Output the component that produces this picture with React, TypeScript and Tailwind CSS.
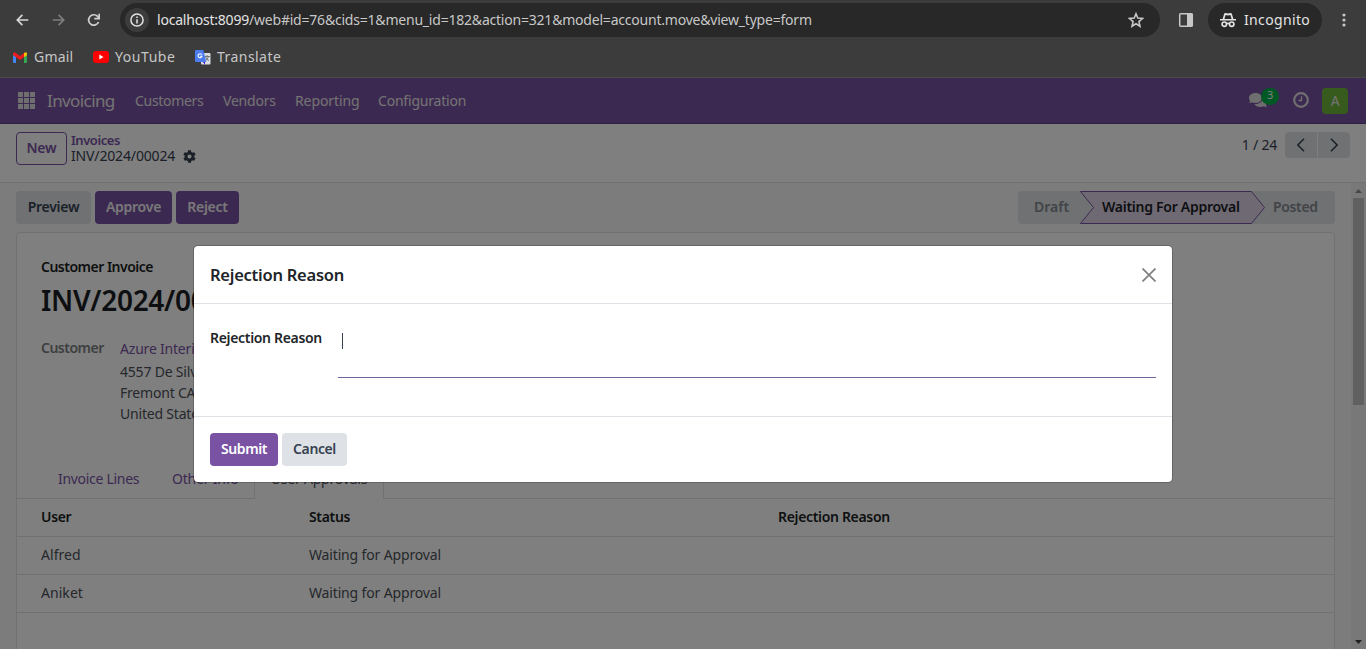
import React from 'react';
import { FaCog, FaComments } from 'react-icons/fa';

function BrowserBar() {
  return (
    <div className="h-[78px] shrink-0 border-b border-[#4a4a4a] bg-[#3c3c3c] text-[#c7c7c7]">
      <div className="flex h-10 items-center">
        <svg className="ml-4 shrink-0" width="13" height="12" viewBox="0 0 13 12" fill="none" stroke="#d6d6d6" strokeWidth="1.7">
          <path d="M12.3 6H1.4M6.4.9 1.3 6l5.1 5.1" />
        </svg>
        <svg className="ml-[23px] shrink-0" width="13" height="12" viewBox="0 0 13 12" fill="none" stroke="#7e7e7e" strokeWidth="1.7">
          <path d="M.7 6h10.9M6.6.9 11.7 6l-5.1 5.1" />
        </svg>
        <svg className="ml-[22px] mr-px shrink-0" width="13" height="14" viewBox="0 0 13 14" fill="none" stroke="#d0d0d0" strokeWidth="1.7">
          <path d="M11.6 9A5.2 5.2 0 1 1 10.6 3.4L12 5" />
          <path d="M12.2.8v4.9H7.3" />
        </svg>
        <div className="ml-[19px] flex h-[34px] w-[1040px] shrink-0 items-center rounded-full bg-[#282828] pl-[5px] pr-4">
          <div className="flex size-6 items-center justify-center rounded-full bg-[#3c3c3c]">
            <svg width="14" height="14" viewBox="0 0 14 14" fill="none" stroke="#e3e3e3" strokeWidth="1.5">
              <circle cx="7" cy="7" r="6.1" />
              <path d="M7 6.2v4.2M7 3.4v1.6" />
            </svg>
          </div>
          <span className="ml-2 flex-1 pb-0.5 text-[14px] tracking-[-0.21px] text-[#e3e3e3]">
            localhost:8099<span className="text-[#c7c7c7]">/web#id=76&amp;cids=1&amp;menu_id=182&amp;action=321&amp;model=account.move&amp;view_type=form</span>
          </span>
          <svg width="16" height="16" viewBox="0 0 16 16" fill="none" stroke="#c7c7c7" strokeWidth="1.6">
            <path d="m8 1.8 1.8 4.3 4.7.4-3.6 3.1L12 14.2 8 11.7 4 14.2l1.100-4.600L1.500 6.500l4.700-.4z" />
          </svg>
        </div>
        <svg className="ml-[18px] shrink-0" width="16" height="16" viewBox="0 0 16 16">
          <rect x="1.700" y="1.700" width="12.600" height="12.600" rx="1" fill="none" stroke="#c7c7c7" strokeWidth="1.500" />
          <path d="M9 1.500h5.500v13H9z" fill="#c7c7c7" />
        </svg>
        <div className="ml-[14px] flex h-[34px] w-[114px] shrink-0 items-center rounded-full bg-[#282828] pl-3">
          <svg width="16" height="16" viewBox="0 0 16 16" fill="#e3e3e3">
            <path d="M0 8.500V6.900h2.600l1.500-5c.2-.7.8-1 1.500-.8L8 1.600l2.400-.5c.7-.2 1.300.1 1.500.8L13.400 6.900H16v1.600zM4.400 6.900h7.200l-1.200-4L8 3.400l-2.400-.5z" fillRule="evenodd" />
            <g fill="none" stroke="#e3e3e3" strokeWidth="1.700">
              <circle cx="4.300" cy="12.200" r="2.200" />
              <circle cx="11.700" cy="12.200" r="2.200" />
              <path d="M6.400 11.800q1.600-.8 3.200 0" />
            </g>
          </svg>
          <span className="ml-2 pb-0.5 text-[14px] tracking-[0.35px] text-[#e3e3e3]">Incognito</span>
        </div>
        <svg className="ml-[20px] shrink-0" width="4" height="16" viewBox="0 0 4 16" fill="#c7c7c7">
          <circle cx="2" cy="3" r="1.600" />
          <circle cx="2" cy="8" r="1.600" />
          <circle cx="2" cy="13" r="1.600" />
        </svg>
      </div>
      <div className="flex h-[34px] items-center pl-[13px] text-[14px]">
        <svg width="14" height="11" viewBox="0 0 14 11">
          <path d="M0 2v8q0 1 1 1h2V4z" fill="#4285f4" />
          <path d="M14 2v8q0 1-1 1h-2V4z" fill="#34a853" />
          <path d="M11 5.200V1l.8-.6Q13 0 14 1v2z" fill="#fbbc04" />
          <path d="M3 5.200 7 8l4-2.800V1L7 4 2.200.4Q1 0 0 1v2z" fill="#e91d1d" />
        </svg>
        <span className="ml-[7px] w-[59px] pb-0.5 tracking-[0.2px]">Gmail</span>
        <svg width="16" height="12" viewBox="0 0 16 12">
          <rect width="16" height="12" rx="3" fill="#f00" />
          <path d="m6.300 3.500 4.200 2.500-4.200 2.500z" fill="#fff" />
        </svg>
        <span className="ml-[6px] w-[80px] pb-0.5 tracking-[0.55px]">YouTube</span>
        <svg width="16" height="15" viewBox="0 0 16 15">
          <rect x="6" y="3" width="9.500" height="11.500" rx="1" fill="#dadce0" />
          <path d="m8 12 2 2.700V12z" fill="#3b18d8" />
          <path d="M9.500 6.500H15M12 5v1.500m1.700 0q-1 3-4 4.500m1-4 3 4" stroke="#6b7075" strokeWidth=".9" fill="none" />
          <path d="M1 0h7.300l3 12H1q-1 0-1-1V1q0-1 1-1" fill="#4d7cf0" />
          <path d="M6.800 4.700A2 2 0 1 0 7 6.200H5.200" stroke="#fff" strokeWidth="1.100" fill="none" />
        </svg>
        <span className="ml-[6px] pb-0.5 tracking-[0.45px]">Translate</span>
      </div>
    </div>
  );
}

function Navbar() {
  return (
    <nav className="flex h-[46px] shrink-0 items-center border-b border-[#5f3f80] bg-[#7952a3] text-[14px] tracking-[-0.2px] text-[#e6e6e6]">
      <svg className="mb-px ml-[18px]" width="17" height="17" viewBox="0 0 17 17" fill="#dedede">
        {[0, 6, 12].map((y) => [0, 6, 12].map((x) => <rect key={`${x}-${y}`} x={x} y={y} width="5" height="5" />))}
      </svg>
      <span className="ml-3 w-[88px] text-[17px] tracking-[-0.6px]">Invoicing</span>
      <span className="w-[88px] tracking-[-0.3px]">Customers</span>
      <span className="w-[72px]">Vendors</span>
      <span className="w-[83px] tracking-[-0.1px]">Reporting</span>
      <span>Configuration</span>
      <div className="relative mb-1 ml-auto mr-[26px] h-4 w-[18px]">
        <FaComments size={18} color="#dedede" />
        <span className="absolute left-[12px] top-[-3px] flex h-[17px] w-[18px] items-center justify-center rounded-full bg-[#00b04b] pb-px text-[11px] text-white">3</span>
      </div>
      <svg className="mb-0.5" width="16" height="16" viewBox="0 0 16 16" fill="none" stroke="#dedede" strokeWidth="2.2">
        <circle cx="8" cy="8" r="6.800" />
        <path d="M8.500 4.300V8.500H5.500" strokeWidth="1.400" />
      </svg>
      <span className="ml-[13px] mr-[18px] flex size-[26px] items-center justify-center rounded bg-[#6fb43a] text-[14px]">A</span>
    </nav>
  );
}

function ControlPanel() {
  return (
    <div className="flex h-[59px] shrink-0 justify-between border-b border-[#dee2e6] bg-white px-4 pt-2 text-[14px]">
      <div className="flex">
        <button className="h-[33px] w-[51px] rounded border border-[#7952a3] pb-0.5 font-semibold tracking-[-0.2px] text-[#7952a3]">New</button>
        <div className="ml-1 flex flex-col">
          <span className="h-4 text-[13px] font-semibold leading-4 tracking-[-0.45px] text-[#7952a3]">Invoices</span>
          <span className="flex h-4 items-center text-[14px] leading-4 tracking-[-0.15px] text-[#374151]">
            <span className="w-[112px]">INV/2024/00024</span>
            <FaCog size={13} color="#374151" />
          </span>
        </div>
      </div>
      <div className="flex h-[26px] items-center text-[#374151]">
        <span className="mr-2 pb-px tracking-[-0.2px]">1 / 24</span>
        <span className="flex h-[26px] w-8 items-center justify-center rounded-l bg-[#dee2e6]">
          <svg width="8" height="14" viewBox="0 0 8 14" fill="none" stroke="#374151" strokeWidth="1.500"><path d="M7 .8.9 7 7 13.200" /></svg>
        </span>
        <span className="ml-px flex h-[26px] w-8 items-center justify-center rounded-r bg-[#dee2e6]">
          <svg width="8" height="14" viewBox="0 0 8 14" fill="none" stroke="#374151" strokeWidth="1.500"><path d="m1 .8 6.100 6.200L1 13.200" /></svg>
        </span>
      </div>
    </div>
  );
}

function StatusBar() {
  return (
    <div className="flex h-[33px] items-stretch justify-between text-[14px] font-semibold tracking-[-0.25px]">
      <div className="flex gap-1 text-[#f1f1f1]">
        <button className="w-[75px] rounded bg-[#dee2e6] pb-0.5 text-[#374151]">Preview</button>
        <button className="w-[77px] rounded bg-[#7952a3] pb-0.5">Approve</button>
        <button className="w-[63px] rounded bg-[#7952a3] pb-0.5">Reject</button>
      </div>
      <div className="relative flex w-[317px] items-center overflow-hidden rounded bg-[#dee2e6] pb-0.5 text-[#85898e]">
        <svg className="absolute left-[62px] top-0" width="186" height="33" viewBox="0 0 186 33" fill="#dfd2e9" stroke="#7952a3">
          <path d="M.5.5H171.500L184.500 16.500 171.500 32.500H.5L13.500 16.500z" />
        </svg>
        <span className="w-[84px] pl-4 tracking-[0px]">Draft</span>
        <span className="relative w-[171px] tracking-[-0.27px] text-[#1b1f24]">Waiting For Approval</span>
        <span className="tracking-[-0.35px]">Posted</span>
      </div>
    </div>
  );
}

const approvals = [
  { user: 'Alfred', status: 'Waiting for Approval' },
  { user: 'Aniket', status: 'Waiting for Approval' },
];

function Sheet() {
  return (
    <div className="mt-2 flex h-[420px] flex-col rounded-t border border-[#dee2e6] bg-white text-[14px] tracking-[-0.2px] text-[#4b5058]">
      <div className="h-[220px] shrink-0 pl-6 pt-6">
        <div className="h-5 font-semibold leading-5 tracking-[-0.5px] text-[#1b1f24]">Customer Invoice</div>
        <div className="mt-1 h-10 text-[28px] font-semibold leading-[38px] tracking-[-0.3px] text-[#1b1f24]">INV/2024/00024</div>
        <div className="mt-[17px] flex">
          <span className="w-[79px] font-semibold leading-5 tracking-[-0.5px] text-[#7a7e84]">Customer</span>
          <div className="leading-[21px]">
            <div className="mb-[2px] text-[#7952a3]">Azure Interior</div>
            <div>4557 De Silva St</div>
            <div>Fremont CA 94538</div>
            <div>United States</div>
          </div>
        </div>
      </div>
      <div className="flex h-[46px] shrink-0 items-stretch text-[#7952a3]">
        <div className="flex w-[139px] items-center border-b border-[#dee2e6] pl-[41px] pt-[6px] tracking-[-0.3px]">Invoice Lines</div>
        <div className="flex w-[98px] items-center border-b border-[#dee2e6] pl-4 pt-[6px]">Other Info</div>
        <div className="flex w-[130px] items-center justify-center border-x border-[#dee2e6] pt-[5px] text-[#4b5058]">User Approvals</div>
        <div className="flex-1 border-b border-[#dee2e6]" />
      </div>
      <div className="flex h-[38px] shrink-0 items-center border-b border-[#dee2e6] pb-0.5 pl-6 font-semibold tracking-[-0.33px] text-[#1b1f24]">
        <span className="w-[268px]">User</span>
        <span className="w-[469px]">Status</span>
        <span>Rejection Reason</span>
      </div>
      {approvals.map((row) => (
        <div key={row.user} className="flex h-[38px] shrink-0 items-center border-b border-[#dee2e6] pb-0.5 pl-6 tracking-[-0.15px]">
          <span className="w-[268px] tracking-[0.05px]">{row.user}</span>
          <span>{row.status}</span>
        </div>
      ))}
    </div>
  );
}

function Scrollbar() {
  return (
    <div className="flex w-[15px] shrink-0 flex-col items-center bg-[#f1f1f1]">
      <svg className="mt-[6px] shrink-0" width="7" height="4" viewBox="0 0 7 4" fill="#8f8f8f"><path d="M3.500 0 7 4H0z" /></svg>
      <div className="mt-[5px] h-[207px] w-[11px] bg-[#c1c1c1]" />
      <svg className="mb-[5px] mt-auto shrink-0" width="7" height="4" viewBox="0 0 7 4" fill="#404040"><path d="M0 0h7L3.500 4z" /></svg>
    </div>
  );
}

function RejectionDialog() {
  return (
    <div className="absolute inset-0 flex items-start justify-center bg-black/50 pt-[167px]">
      <div role="dialog" className="flex w-[980px] flex-col rounded-[5px] border border-black/20 bg-white bg-clip-padding text-[14px] text-[#212529]">
        <div className="flex h-[58px] items-center justify-between border-b border-[#dee2e6] px-4">
          <h4 className="pt-0.5 text-[16.500px] font-semibold tracking-[-0.25px]">Rejection Reason</h4>
          <svg width="14" height="14" viewBox="0 0 14 14" stroke="#7f7f7f" strokeWidth="1.700"><path d="m.5.5 13 13M13.500.5l-13 13" /></svg>
        </div>
        <div className="flex h-[113px] border-b border-[#dee2e6] px-4 pt-6">
          <span className="w-32 font-semibold leading-5 tracking-[-0.32px]">Rejection Reason</span>
          <div className="h-[50px] flex-1 border-b border-[#71639e] pl-1 pt-[5px]">
            <div className="h-4 w-px bg-[#374151]" />
          </div>
        </div>
        <div className="flex h-[65px] gap-1 px-4 pt-4 font-semibold tracking-[-0.4px]">
          <button className="h-[33px] w-[68px] rounded bg-[#7952a3] pb-0.5 text-white">Submit</button>
          <button className="h-[33px] w-[65px] rounded bg-[#dee2e6] pb-0.5 text-[#374151]">Cancel</button>
        </div>
      </div>
    </div>
  );
}

export default function App() {
  return (
    <div className="flex h-[649px] w-[1366px] flex-col overflow-hidden whitespace-nowrap font-['Noto_Sans','Open_Sans',sans-serif]">
      <BrowserBar />
      <div className="relative flex h-[571px] flex-col">
        <Navbar />
        <ControlPanel />
        <div className="flex min-h-0 flex-1 bg-[#f8f9fa]">
          <div className="min-w-0 flex-1 overflow-hidden px-4 pt-2">
            <StatusBar />
            <Sheet />
          </div>
          <Scrollbar />
        </div>
        <RejectionDialog />
      </div>
    </div>
  );
}
